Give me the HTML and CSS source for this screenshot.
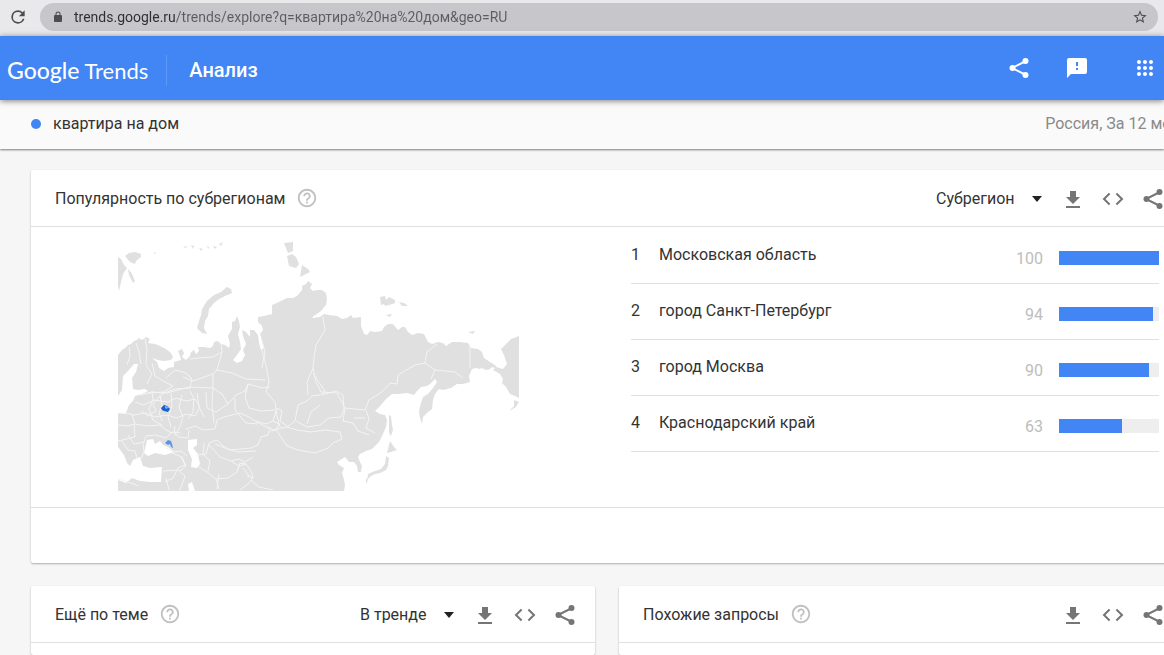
FILE: index.html
```html
<!DOCTYPE html>
<html lang="ru">

	<head>
		<meta charset="UTF-8">
		<title>Google Trends</title>
		<link rel="stylesheet" href="styles.css">
	</head>

	<body>
		<!-- shared icons -->
		<svg class="sprite" aria-hidden="true">
			<symbol id="share" viewBox="0 0 24 24">
				<path d="M19 5L5 12l14 7" fill="none" stroke="currentColor" stroke-width="2" />
				<circle cx="18.500" cy="5" r="3" />
				<circle cx="5.500" cy="12" r="3" />
				<circle cx="18.500" cy="19" r="3" />
			</symbol>
			<symbol id="download" viewBox="0 0 24 24">
				<path d="M9 4h6v6h4l-7 7-7-7h4zM5 19h14v2H5z" />
			</symbol>
			<symbol id="code" viewBox="0 0 24 24">
				<path d="M8.600 6.500L3 12l5.600 5.500M15.400 6.500L21 12l-5.600 5.500" fill="none" stroke="currentColor" stroke-width="2" />
			</symbol>
			<symbol id="help" viewBox="0 0 24 24">
				<path d="M11 18h2v-2h-2v2zm1-16C6.480 2 2 6.480 2 12s4.480 10 10 10 10-4.480 10-10S17.520 2 12 2zm0 18c-4.410 0-8-3.590-8-8s3.590-8 8-8 8 3.590 8 8-3.590 8-8 8zm0-14c-2.210 0-4 1.790-4 4h2c0-1.100.9-2 2-2s2 .9 2 2c0 2-3 1.750-3 5h2c0-2.250 3-2.500 3-5 0-2.210-1.790-4-4-4z" />
			</symbol>
		</svg>

		<div class="browser">
			<button class="icon_btn reload" aria-label="Обновить">
				<svg viewBox="0 0 24 24"><path d="M17.650 6.350A7.960 7.960 0 0 0 12 4a8 8 0 1 0 7.730 10h-2.080A6 6 0 1 1 12 6c1.660 0 3.140.69 4.220 1.780L13 11h7V4z" /></svg>
			</button>
			<div class="omnibox">
				<svg class="lock" viewBox="0 0 24 24"><path d="M18 8h-1V6A5 5 0 0 0 7 6v2H6a2 2 0 0 0-2 2v10c0 1.100.9 2 2 2h12a2 2 0 0 0 2-2V10a2 2 0 0 0-2-2zM9 6a3 3 0 0 1 6 0v2H9z" /></svg>
				<input class="url" type="text" aria-label="Адрес" value="trends.google.ru/trends/explore?q=квартира%20на%20дом&amp;geo=RU">
				<button class="icon_btn star" aria-label="В закладки">
					<svg viewBox="0 0 24 24"><path d="M22 9.240l-7.190-.62L12 2 9.190 8.630 2 9.240l5.460 4.730L5.820 21 12 17.270 18.180 21l-1.630-7.030L22 9.240zM12 15.400l-3.760 2.270 1-4.280-3.320-2.880 4.380-.38L12 6.100l1.710 4.040 4.380.38-3.320 2.880 1 4.280L12 15.400z" /></svg>
				</button>
			</div>
		</div>

		<header class="header">
			<a class="logo" href="#"><span class="logo_google">Google</span> <span class="logo_trends">Trends</span></a>
			<h1 class="section">Анализ</h1>
			<div class="header_icons">
				<button class="icon_btn" aria-label="Поделиться"><svg><use href="#share" /></svg></button>
				<button class="icon_btn" aria-label="Отзыв">
					<svg viewBox="0 0 24 24"><path d="M20 2H4a2 2 0 0 0-2 2v18l4-4h14a2 2 0 0 0 2-2V4a2 2 0 0 0-2-2zm-7 12h-2v-2h2v2zm0-4h-2V6h2v4z" /></svg>
				</button>
				<button class="icon_btn apps" aria-label="Приложения">
					<svg viewBox="0 0 24 24"><path d="M6 8c1.100 0 2-.9 2-2s-.9-2-2-2-2 .9-2 2 .9 2 2 2zm6 12c1.100 0 2-.9 2-2s-.9-2-2-2-2 .9-2 2 .9 2 2 2zm-6 0c1.100 0 2-.9 2-2s-.9-2-2-2-2 .9-2 2 .9 2 2 2zm0-6c1.100 0 2-.9 2-2s-.9-2-2-2-2 .9-2 2 .9 2 2 2zm6 0c1.100 0 2-.9 2-2s-.9-2-2-2-2 .9-2 2 .9 2 2 2zm4-8c0 1.100.9 2 2 2s2-.9 2-2-.9-2-2-2-2 .9-2 2zm-4 2c1.100 0 2-.9 2-2s-.9-2-2-2-2 .9-2 2 .9 2 2 2zm6 6c1.100 0 2-.9 2-2s-.9-2-2-2-2 .9-2 2 .9 2 2 2zm0 6c1.100 0 2-.9 2-2s-.9-2-2-2-2 .9-2 2 .9 2 2 2z" /></svg>
				</button>
			</div>
		</header>

		<div class="query_bar">
			<div class="query">
				<span class="dot"></span>
				<span>квартира на дом</span>
				<span class="filters">Россия, За 12 месяцев</span>
			</div>
		</div>

		<main class="content">
			<section class="card card_wide">
				<div class="card_head">
					<h2>Популярность по субрегионам</h2>
					<button class="icon_btn help" aria-label="Справка"><svg><use href="#help" /></svg></button>
					<div class="tools">
						<label class="picker"><select aria-label="Уровень"><option>Субрегион</option></select></label>
						<button class="icon_btn" aria-label="Скачать"><svg><use href="#download" /></svg></button>
						<button class="icon_btn" aria-label="Встроить"><svg><use href="#code" /></svg></button>
						<button class="icon_btn" aria-label="Поделиться"><svg><use href="#share" /></svg></button>
					</div>
				</div>
				<div class="card_body">
					<div class="map_wrap">
						<svg class="map" viewBox="118 242 401 249" role="img" aria-label="Карта">
							<!-- land -->
							<g class="land">
								<path d="M118 355L122 350 125 348 128 345 131 344 134 341 137 340 139 338 142 340 146 337 150 339 148 343 155 344 160 346 166 349 171 353 173 357 171 360 164 361 158 360 152 358 157 362 159 368 164 371 168 368 174 367 174 362 181 360 180 356 178 351 182 349 184 353 182 357 186 360 190 356 191 352 194 350 196 354 199 351 198 347 204 347 210 348 213 346 214 342 218 341 221 344 225 345 229 348 230 344 228 336 232 329 232 322 235 321 237 316 239 321 240 327 238 334 240 342 241 349 237 355 233 360 237 363 242 361 245 355 243 350 246 344 243 336 242 330 246 332 250 337 250 330 254 330 258 335 259 343 261 350 264 348 262 340 260 334 263 330 262 326 258 322 258 317 264 316 272 314 272 305 279 302 287 298 293 298 297 296 302 290 302 286 306 284 308 281 312 284 310 288 313 291 317 290 322 290 326 293 327 299 326 305 321 311 314 316 312 318 320 317 324 314 329 315 337 316 342 319 347 318 351 315 353 318 361 317 361 326 364 334 367 335 370 331 375 332 382 331 384 327 388 324 393 324 398 330 402 327 405 327 408 332 412 335 418 333 424 334 428 342 432 344 438 342 443 343 446 346 452 342 460 342 468 343 471 348 478 349 482 352 484 358 490 362 495 365 498 369 492 367 486 370 480 367 476 368 472 369 469 376 470 382 463 384 457 384 451 388 443 390 439 389 435 394 433 400 432 409 428 412 423 417 422 424 420 418 419 411 421 403 423 397 428 394 433 388 437 382 435 379 430 384 427 386 421 387 417 391 414 395 407 393 398 394 392 394 386 399 381 405 375 411 380 414 385 415 387 420 386 427 382 436 379 442 372 449 366 451 360 454 358 457 360 462 362 466 361 472 358 472 357 466 354 462 349 462 345 457 337 462 339 465 344 468 342 473 344 480 345 485 344 491 118 491z" />
								<path d="M473 362l8 1 7-1 6 4-6 4-5-2-5 1zM501 349l5-5 5-5 8-3v62l-4-2-5-2-4-7-4-4 1-4-3-5-7-4 3-3 7 2 4-5-3-9zM514 400l5 2-3 5-7 4 5-5z" />
								<path d="M231 289l1 4-7 3-6 3-5 4-5 6-1 7-3 5-1 7 3 6-5-1-5-5 2-7 2-6 1-6 5-8 7-6 7-3 6-5z" />
								<path d="M118 257l3 2 3 6 3 3-4 6-2 8-2 9-1-5zM125 256l4-3 6-1 6 2v3l-5 4-1 3-5-2zM128 269l3 3 4 9-2 2-4-8z" />
								<path d="M284 243l9-1v9l-5 2zM287 256l5-2 4 3 3 7-3 4-7-2zM302 265l6 4 2 3-6 3-4 2z" />
								<path d="M183 247l4-1-1 2zM191 245l3 1-1 3zM199 248l4 1-2 2zM206 246l3 1v2zM213 246l4 1-2 2zM219 244l4-2-2 4zM154 252l2 1-2 1z" />
								<path d="M380 297l5-1 1 4 3-3 6 3v3l-6 2-4 1-1-2-3 1zM399 302l5 1 4 3h-6zM386 315l6-1-2 3zM468 332l7-1-2 3z" />
								<path d="M389 415l2 1 1 9 1 5-2 6-2-3zM390 441l4 6 3 3-6 2-4 1zM386 456l3 2-1 8-2 4-6 3-5 1-4 2-4 4 1-6 7-3 6-2 4-5zM366 478l2 2-2 4z" />
							</g>
							<!-- seas -->
							<g class="sea">
								<path d="M134 364h4l-2 8-4 6 1 11 5 1 7-1 3 2-6 3-7 2-2 5-4 4-3 8h-8v-17l4-6 1-14 5-5z" />
								<path d="M147 440L153 439 155 444 160 441 163 445 168 447 174 452 165 455 155 453 148 456 144 453z" />
								<path d="M188 440l9-1v6l-4 3 5 6 2 10-3 4-6-1 1-8-4-9z" />
								<path d="M118 447L124 455 127 463 130 466 133 460 140 457 143 466 150 468 162 467 161 482 150 482 140 481 132 478 126 483 118 480z" />
								<path d="M188 484l4-2 3 9h-6zM313 316l8-2-7 4z" />
							</g>
							<!-- borders -->
							<g class="borders">
								<path d="M129 347l1 9-3 9M136 343l3 9 2 12M145 339l2 11-1 15 6 9-5 10M152 363l3 13 10 6 8 4-9 6-16 1M166 378l9-8 11 3 6 6-2 9-15 1-13 5-9 10 3 7-8 5-7-5M190 359l8-1 15-1 9-5-1-8M222 352l-5 18-4 4v14M217 370l15 3 14 6 19 1" />
								<path d="M213 374l-20 7-10-4M213 388l-24-1-22 6-15-1-12 3M213 388l9 6 6 10 8-9 9-4 3-7 14 4 8-1M262 368l3-16-4-14M262 350l5 20 2 12-3 10 9 10 2 14 3 11M248 384l-3 13 4 11 12 3 14-1M228 404l-12 8-9-4-1-16" />
								<path d="M118 413l14 1 3 10 12 2 13-1 6 5 6 3M135 402l9 3 10-5 14 2 8-4 10 3 9-2 5 8-5 9-9-2-9 4-10-3-12 2-9-4-13 2M152 391l1 9-4 9 4 11 9 5M160 395l2 11-3 7 3 8M171 393l1 13-4 11 3 10M182 395l-3 12 4 10-3 10-5 8M190 391l4 8-1 13-5 7M197 393l2 14 5 10M213 388l-1 17 2 18M235 398v12l11 13 12 1" />
								<path d="M186 429l9-3 8 4 12-1 2-9 7-3 16-4 9 4 8 5 13 7-2 6-7 2-3 8-7 3-21 2-15-6M118 425l10 1 6-2 1 13-17 4M128 435l6 9 10-2 2-6 9-1 11 3 6-6 8 1M122 441l6 9 7 1 2 7M143 442l1 10-3 7M175 426l-1 7 5 4 9 1 1-8M166 448l7 4 8-1 6 5M172 453l10 4 4 9M181 457l4 8-7 3-5 10-8 4M118 479l10 3 11 4M163 471l19-1 4-5" />
								<path d="M197 455l9-1 3-11 8-3 5 5 6 4 10 3 18-1M209 445l11 12 11 4 8-2 6 3 8-5M204 443l-1 11 7 7-2 10M199 467l8 5 9 7 3 10M216 479l12-1 9-6 3-9 6 1 5 7 2 7-5 6-8 6M231 461l8 5 7-2M219 474l-2 15M179 471l6 5-5 14M166 478l3 12M243 468l6 8M247 476l6 2M251 480l8 7 14 3" />
								<path d="M271 431L276 429 281 437 287 446 298 450 315 453 328 448 333 443 342 439 340 432 325 430 311 432 297 430 287 427 276 429M256 421l10 3 7-3 6 3-4 7-7-4M273 421l4-13 5 3-2 10 7 5M287 427l8-6 3-16 9-4 5-5 8-1 5-4-7-10-5-8M296 421l11 6 13-2 9-7 12-1 3-8-1-14-7-4-14 4M320 405l-9 7-4 12" />
								<path d="M323 317L325 330 316 345 314 358 313 368 316 382 321 392 337 393 345 408 365 410 369 400 382 392 390 383 397 384 398 375 415 365 425 363 427 352 437 344M425 363l10 7 20 2 8 6M435 370l-4 9M470 344v24M345 408l-2 13 10 2 5 8 11 4M366 410l3 9-3 9 9 5M354 418h11M313 368l-6 14 1 13" />
							</g>
							<path class="moscow" d="M161 408l3-3 3 1 3 3-2 3-4-1-2-1z" />
							<path class="moscow_in" d="M165 406l3 1-1 2-2-1z" />
							<path class="kuban" d="M165 443l3-3 3 1 1 3 1 4-2-1-1-3-2 1z" />
						</svg>
					</div>
					<table class="regions">
						<tr>
							<td class="num">1</td>
							<td>Московская область</td>
							<td class="value">100</td>
							<td class="bar_cell"><div class="bar"><div class="fill" style="width: 100%"></div></div></td>
						</tr>
						<tr>
							<td class="num">2</td>
							<td>город Санкт-Петербург</td>
							<td class="value">94</td>
							<td class="bar_cell"><div class="bar"><div class="fill" style="width: 94%"></div></div></td>
						</tr>
						<tr>
							<td class="num">3</td>
							<td>город Москва</td>
							<td class="value">90</td>
							<td class="bar_cell"><div class="bar"><div class="fill" style="width: 90%"></div></div></td>
						</tr>
						<tr>
							<td class="num">4</td>
							<td>Краснодарский край</td>
							<td class="value">63</td>
							<td class="bar_cell"><div class="bar"><div class="fill" style="width: 63%"></div></div></td>
						</tr>
					</table>
				</div>
				<div class="card_foot"></div>
			</section>

			<section class="card">
				<div class="card_head">
					<h2>Ещё по теме</h2>
					<button class="icon_btn help" aria-label="Справка"><svg><use href="#help" /></svg></button>
					<div class="tools">
						<label class="picker"><select aria-label="Сортировка"><option>В тренде</option></select></label>
						<button class="icon_btn" aria-label="Скачать"><svg><use href="#download" /></svg></button>
						<button class="icon_btn" aria-label="Встроить"><svg><use href="#code" /></svg></button>
						<button class="icon_btn" aria-label="Поделиться"><svg><use href="#share" /></svg></button>
					</div>
				</div>
			</section>

			<section class="card">
				<div class="card_head">
					<h2>Похожие запросы</h2>
					<button class="icon_btn help" aria-label="Справка"><svg><use href="#help" /></svg></button>
					<div class="tools">
						<button class="icon_btn" aria-label="Скачать"><svg><use href="#download" /></svg></button>
						<button class="icon_btn" aria-label="Встроить"><svg><use href="#code" /></svg></button>
						<button class="icon_btn" aria-label="Поделиться"><svg><use href="#share" /></svg></button>
					</div>
				</div>
			</section>
		</main>
	</body>

</html>
```
FILE: styles.css
```css
* {
	margin: 0;
	padding: 0;
	box-sizing: border-box;
}

body {
	display: flex;
	flex-direction: column;
	height: 100vh;
	overflow: hidden;
	background-color: #f6f6f6;
	color: #333;
	font: 16px/24px Roboto, "Noto Sans", sans-serif;
}

a {
	color: inherit;
	text-decoration: none;
}

.sprite {
	display: none;
}

.icon_btn {
	flex: none;
	width: 24px;
	height: 24px;
	border: 0;
	background: none;
	color: #757575;
	cursor: pointer;
}

.icon_btn svg {
	display: block;
	width: 100%;
	height: 100%;
	fill: currentColor;
}

/* browser bar */
.browser {
	display: flex;
	flex: none;
	align-items: center;
	gap: 12px;
	height: 36px;
	padding: 0 6px 2px 8px;
	background-color: #e9e9ec;
}

.reload {
	width: 20px;
	height: 20px;
	color: #4c4d50;
}

.omnibox {
	display: flex;
	flex: 1;
	align-items: center;
	height: 28px;
	padding: 0 10px 0 12px;
	border-radius: 14px;
	background-color: #c7c6cb;
}

.lock {
	width: 12px;
	height: 14px;
	margin-right: 10px;
	fill: #4c4d50;
}

.url {
	flex: 1;
	border: 0;
	outline: 0;
	background: linear-gradient(to right, #2e2e32 102px, #5d5c62 102px);
	background-clip: text;
	-webkit-background-clip: text;
	color: transparent;
	font: 14px/20px Roboto, "Noto Sans", sans-serif;
}

.star {
	width: 16px;
	height: 16px;
	color: #4c4d50;
}

/* header */
.header {
	position: relative;
	z-index: 2;
	display: flex;
	flex: none;
	align-items: center;
	height: 64px;
	padding: 4px 7px 0;
	background-color: #4285f4;
	box-shadow: 0 1px 6px rgba(0, 0, 0, 0.5);
	color: #fff;
}

.logo {
	display: flex;
	align-items: baseline;
	gap: 5px;
	padding-right: 18px;
	border-right: 1px solid #5e98f6;
	font-family: Lato, "Noto Sans", sans-serif;
	line-height: 30px;
}

.logo_google {
	font-size: 23px;
	font-weight: 500;
}

.logo_trends {
	font-size: 22px;
}

.section {
	margin-left: 22px;
	font-size: 20px;
	font-weight: 500;
}

.header_icons {
	display: flex;
	gap: 34px;
	margin-left: auto;
	padding-bottom: 4px;
}

.header_icons .icon_btn {
	color: #fff;
}

.header_icons .apps {
	margin-left: 10px;
}

/* query */
.query_bar {
	flex: none;
	height: 49px;
	background-color: #fafafa;
	box-shadow: 0 1px 2px rgba(0, 0, 0, 0.5);
}

.query {
	display: flex;
	align-items: center;
	height: 48px;
	margin-right: -51px;
	padding-left: 31px;
	white-space: nowrap;
}

.dot {
	width: 10px;
	height: 10px;
	margin-right: 12px;
	border-radius: 50%;
	background-color: #4285f4;
}

.filters {
	margin-left: auto;
	color: #8a8a8a;
}

/* cards, the last column runs past the right side of the window */
.content {
	display: grid;
	flex: 1;
	grid-template-columns: 1fr 1fr;
	grid-template-rows: auto 1fr;
	gap: 23px 24px;
	margin: 21px -19px 0 31px;
}

.card {
	border-radius: 2px;
	background-color: #fff;
	box-shadow: 0 1px 2px rgba(0, 0, 0, 0.3);
}

.card_wide {
	grid-column: span 2;
}

.card_head {
	display: flex;
	align-items: center;
	height: 57px;
	padding: 2px 18px 0 24px;
	border-bottom: 1px solid #e0e0e0;
}

.card_head h2 {
	font-size: 16px;
	font-weight: 400;
}

.help {
	margin-left: 10px;
	padding-bottom: 2px;
	color: #c0c0c0;
}

.tools {
	display: flex;
	align-items: center;
	gap: 16px;
	margin-left: auto;
}

.picker {
	display: flex;
	align-items: center;
	gap: 17px;
	margin-right: 3px;
}

.picker::after {
	content: "";
	border: 5px solid transparent;
	border-top: 6px solid #222;
	border-bottom: 0;
}

.picker select {
	appearance: none;
	border: 0;
	background: none;
	color: inherit;
	font: inherit;
}

.card_body {
	display: grid;
	grid-template-columns: 1fr 1fr;
	height: 280px;
}

.map_wrap {
	display: flex;
	justify-content: center;
	padding: 15px 2px 0 0;
}

.map {
	width: 401px;
	height: 249px;
}

.land {
	fill: #e0e0e0;
}

.sea {
	fill: #fff;
}

.borders {
	fill: none;
	stroke: #f4f4f4;
	stroke-width: 1;
	stroke-linejoin: round;
}

.moscow {
	fill: #1a5fd0;
}

.moscow_in {
	fill: #8ab4f8;
}

.kuban {
	fill: #5b93ea;
}

.regions {
	align-self: start;
	margin: 0 24px;
	border-collapse: collapse;
}

.regions td {
	height: 56px;
	border-bottom: 1px solid #e0e0e0;
}

.regions .num {
	width: 28px;
}

.regions .value {
	padding: 8px 16px 0 0;
	color: #bdbdbd;
	text-align: right;
}

.regions .bar_cell {
	width: 100px;
	padding-top: 6px;
}

.bar {
	height: 14px;
	background-color: #eee;
}

.fill {
	height: 100%;
	background-color: #4285f4;
}

.card_foot {
	height: 56px;
	border-top: 1px solid #e0e0e0;
}
```
